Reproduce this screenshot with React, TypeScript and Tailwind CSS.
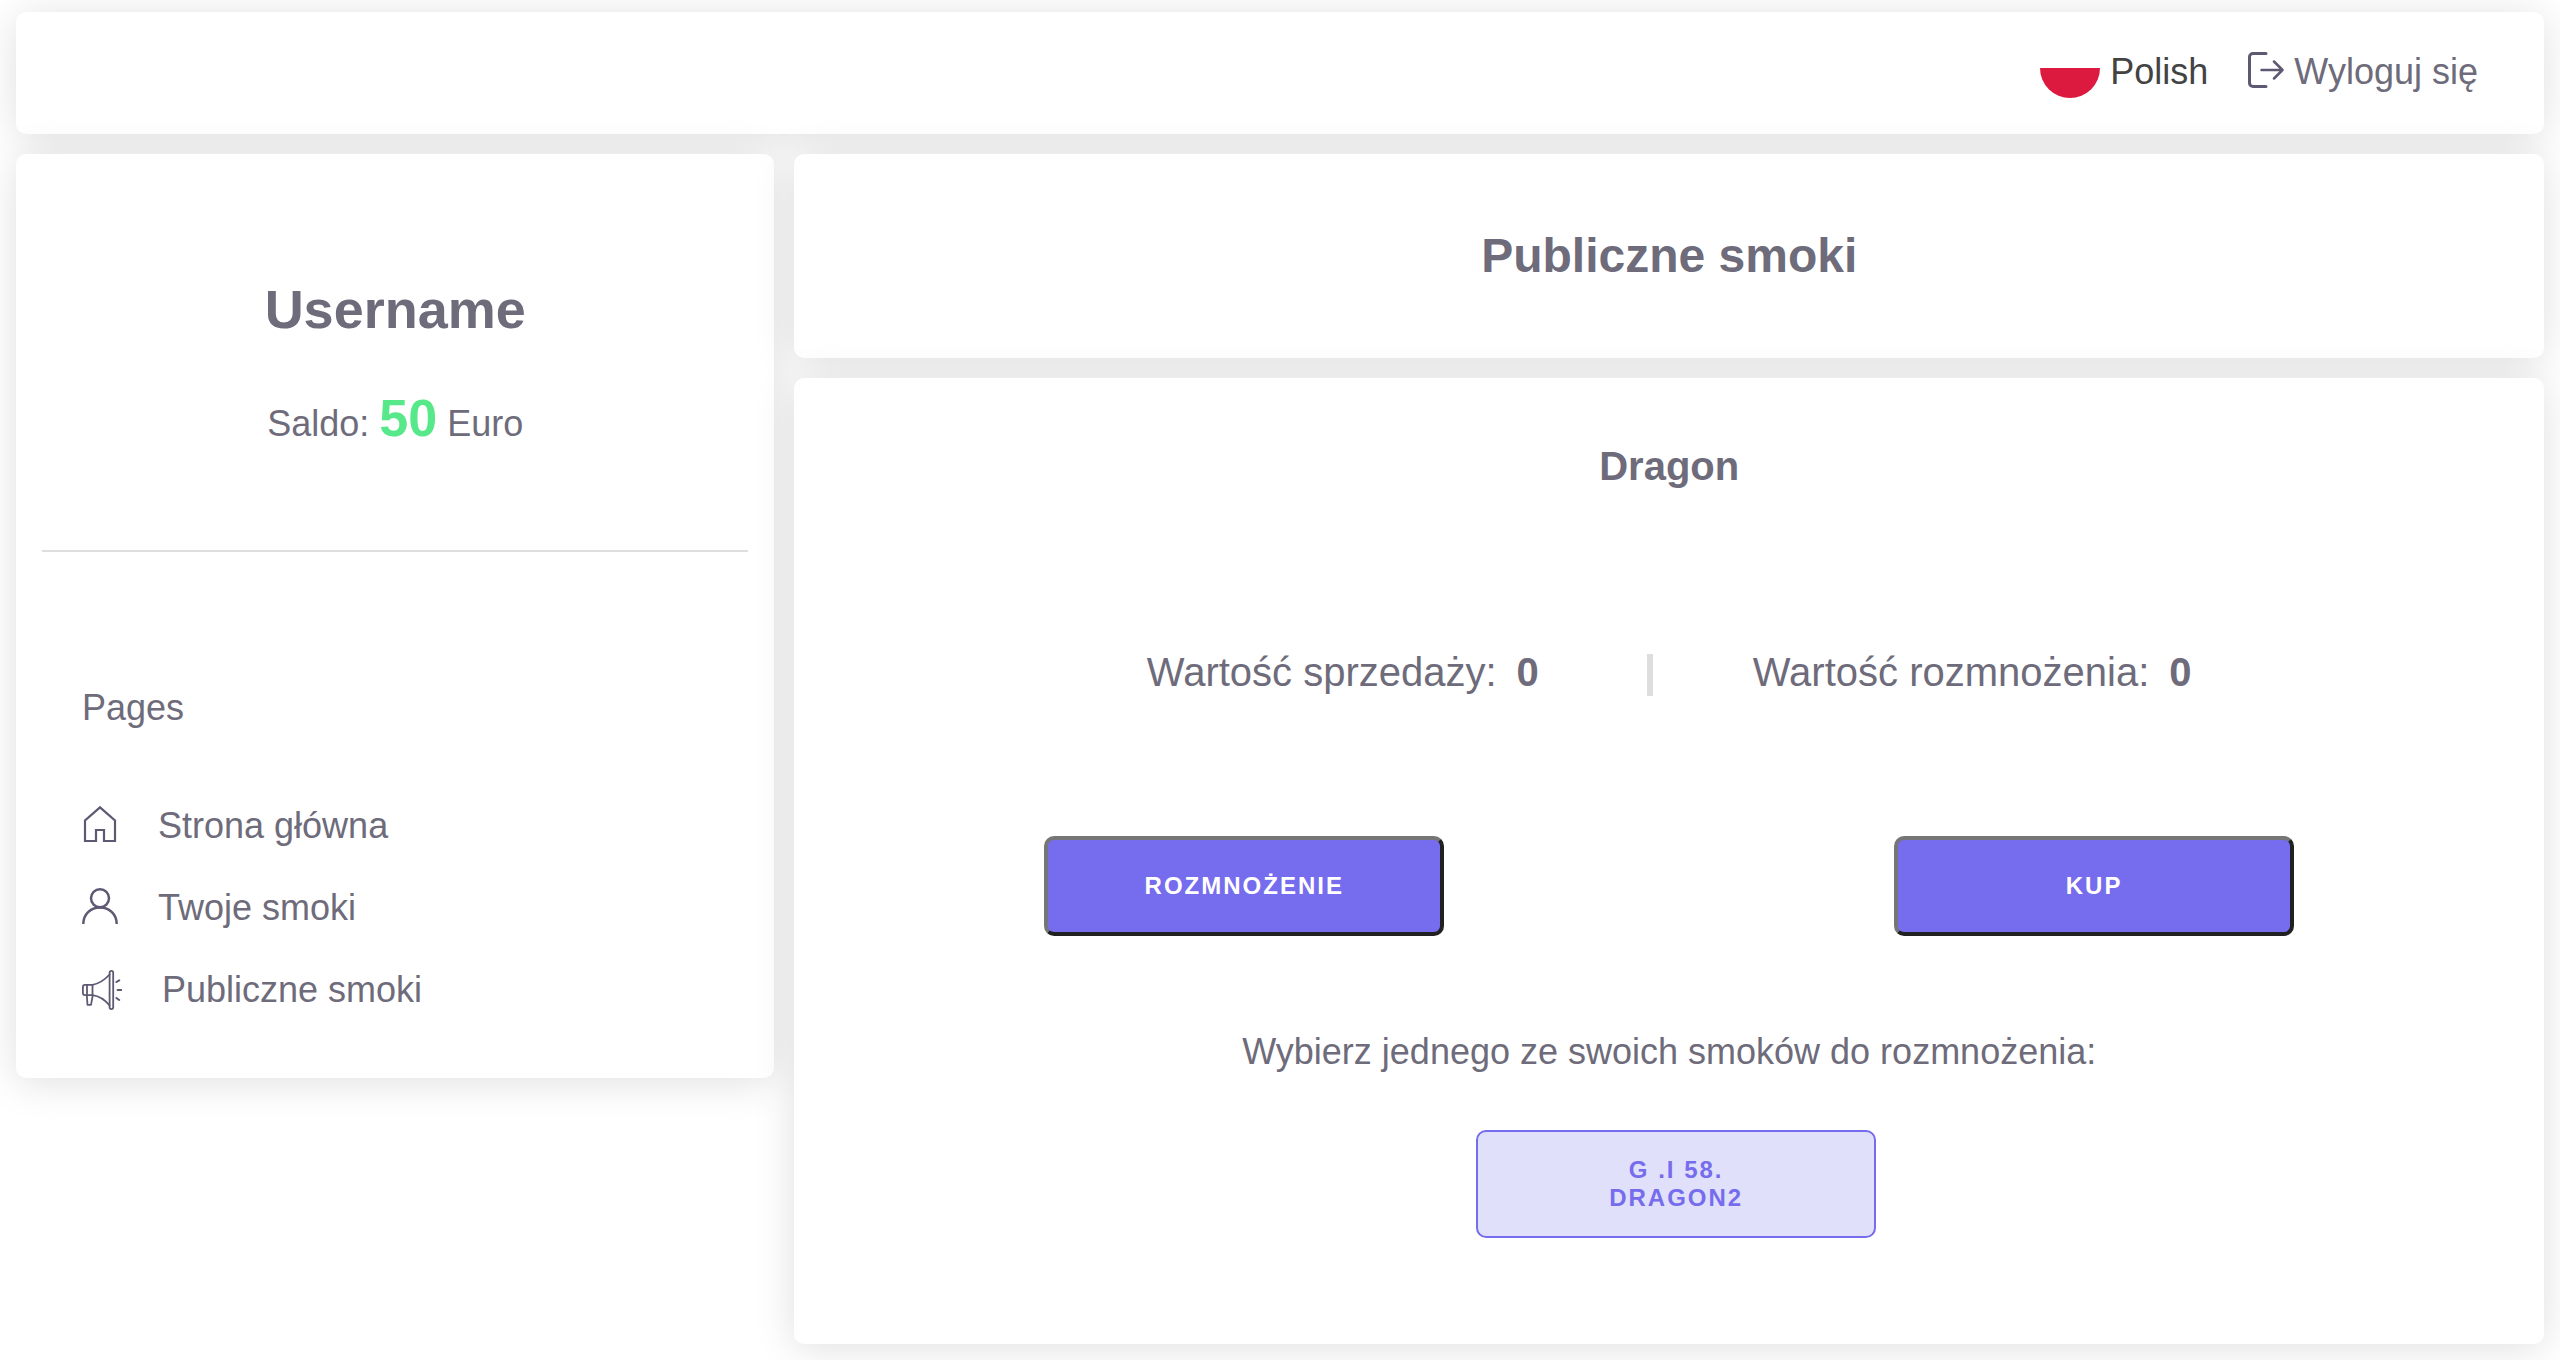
import React from "react";

const card = "rounded-[10px] bg-white shadow-[0_4px_40px_rgba(0,0,0,0.13)]";

function LogoutIcon() {
  return (
    <svg className="mb-1 size-9 shrink-0 text-[#5e5873]" viewBox="0 0 36 36" fill="none" stroke="currentColor" strokeWidth="3" strokeLinecap="round" strokeLinejoin="round" aria-hidden="true">
      <path d="M18 1.500H5A3.500 3.500 0 0 0 1.500 5V31A3.500 3.500 0 0 0 5 34.500H18" />
      <path d="M13.500 18H34.500M26 9.500L34.500 18L26 26.500" strokeWidth="2.500" />
    </svg>
  );
}

function HomeIcon() {
  return (
    <svg className="size-9 shrink-0" viewBox="0 0 36 36" fill="none" stroke="currentColor" strokeWidth="2.200" aria-hidden="true">
      <path d="M3 35V14.500L18 1.300L33 14.500V35H22V24H14V35Z" />
    </svg>
  );
}

function UserIcon() {
  return (
    <svg className="size-9 shrink-0" viewBox="0 0 36 36" fill="none" stroke="currentColor" strokeWidth="2.500" aria-hidden="true">
      <circle cx="18" cy="10.300" r="9" />
      <path d="M1.300 36C1.300 26.500 8.500 19.500 18 19.500S34.700 26.500 34.700 36" />
    </svg>
  );
}

function MegaphoneIcon() {
  return (
    <svg className="size-10 shrink-0" viewBox="0 0 40 40" fill="none" stroke="currentColor" strokeWidth="1.800" strokeLinecap="round" strokeLinejoin="round" aria-hidden="true">
      <rect x="27.600" y="0.900" width="3.600" height="38.200" rx="1.800" />
      <path d="M27.600 4.500C23 9.500 16.500 13.800 10.500 14.800H3A2.200 2.200 0 0 0 0.900 17V23A2.200 2.200 0 0 0 3 25.200H10.500C16.500 26 23 30 27.600 35.500" />
      <path d="M5 14.800V25.200M10.500 14.800V25.200M4.800 25.200L5.500 34.800H9L10.800 25.200" />
      <path d="M34.400 12L37.200 10.300M35.600 20H39.200M34.400 28L37.200 30" strokeWidth="2" />
    </svg>
  );
}

const pages = [
  { label: "Strona główna", Icon: HomeIcon },
  { label: "Twoje smoki", Icon: UserIcon },
  { label: "Publiczne smoki", Icon: MegaphoneIcon },
];

function ActionButton({ children }: { children: React.ReactNode }) {
  return (
    <button className="h-[100px] w-[400px] rounded-[10px] border-4 border-t-[#767676] border-r-[#212121] border-b-[#212121] border-l-[#767676] bg-[#766cee] text-2xl font-bold tracking-[2px] text-white uppercase">
      {children}
    </button>
  );
}

export default function App() {
  return (
    <div className="flex flex-col gap-5 bg-white px-4 pt-3 pb-4 font-['Liberation_Sans',Arial,sans-serif] text-[36px] leading-10 text-[#6e6b7b]">
      <header className={`${card} flex items-center justify-end gap-10 pt-[26px] pr-[66px] pb-7`}>
        <button className="flex items-center gap-2.5 text-[#434343]">
          <span className="mb-2 flex size-[60px] flex-col overflow-hidden rounded-full bg-white">
            <span className="mt-auto h-[30px] bg-[#dc1a40]" />
          </span>
          Polish
        </button>
        <a href="#logout" className="flex items-center gap-2.5">
          <LogoutIcon />
          Wyloguj się
        </a>
      </header>

      <div className="flex items-start gap-5">
        <aside className={`${card} w-[30%] shrink-0 pt-[123px] pb-[68px]`}>
          <div className="text-center">
            <h2 className="text-[54px] leading-[64px] font-bold">Username</h2>
            <p className="mt-[51px] leading-[60px]">
              Saldo: <strong className="text-[52px] leading-none text-[#57e889]">50</strong> Euro
            </p>
          </div>
          <hr className="mx-[26px] mt-24 border-t-2 border-[#dedede]" />
          <nav className="mt-[136px] px-[66px]" aria-labelledby="pages-title">
            <h3 id="pages-title">Pages</h3>
            <ul className="mt-[78px] flex flex-col gap-[42px]">
              {pages.map(({ label, Icon }) => (
                <li key={label}>
                  <a href="#page" className="flex items-start gap-10">
                    <span className="text-[#5e5873]">
                      <Icon />
                    </span>
                    {label}
                  </a>
                </li>
              ))}
            </ul>
          </nav>
        </aside>

        <main className="flex min-w-0 flex-1 flex-col gap-5">
          <section className={`${card} py-[74px] text-center`}>
            <h1 className="text-5xl leading-[56px] font-bold">Publiczne smoki</h1>
          </section>

          <section className={`${card} flex flex-col px-[25px] pt-16 pb-[106px] text-center`}>
            <h2 className="text-[40px] leading-12 font-bold">Dragon</h2>
            <div className="mt-[158px] flex items-center justify-center gap-[100px] text-[40px] leading-12">
              <p className="flex gap-5 pr-2">
                Wartość sprzedaży: <strong>0</strong>
              </p>
              <div className="mt-1.5 h-[42px] w-1.5 bg-[#dedede]" />
              <p className="flex gap-5">
                Wartość rozmnożenia: <strong>0</strong>
              </p>
            </div>
            <div className="mt-[140px] flex justify-around">
              <ActionButton>Rozmnożenie</ActionButton>
              <ActionButton>Kup</ActionButton>
            </div>
            <p className="mt-24">Wybierz jednego ze swoich smoków do rozmnożenia:</p>
            <div className="mt-[58px] flex justify-center pl-3.5">
              <button className="h-[108px] w-[400px] rounded-[10px] border-2 border-[#766cee] bg-[#e1e0fa] text-2xl leading-7 font-bold tracking-[2px] text-[#766cee] uppercase">
                G .I 58.
                <br />
                Dragon2
              </button>
            </div>
          </section>
        </main>
      </div>
    </div>
  );
}
